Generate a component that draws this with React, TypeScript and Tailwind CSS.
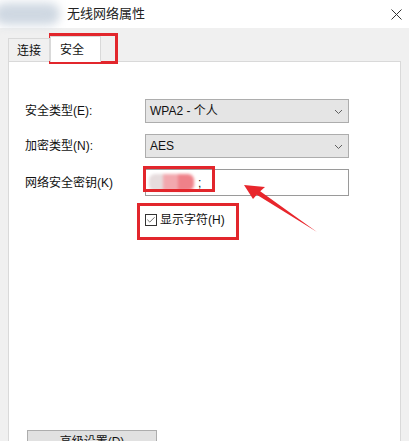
import { Check } from "lucide-react";

const font = "font-['Liberation_Sans','Noto_Sans_CJK_SC',sans-serif]";

function Select({ value }: { value: string }) {
  return (
    <div className="flex h-[24px] w-[204px] items-center justify-between border border-[#adadad] bg-[#e5e5e5] pl-[4px] pr-[5px] text-[12px] text-[#111]">
      <span>{value}</span>
      <svg width="9" height="6" viewBox="0 0 9 6" className="mt-[1px]">
        <path d="M1 1l3.5 3.5L8 1" fill="none" stroke="#606060" strokeWidth="1" />
      </svg>
    </div>
  );
}

export default function App() {
  return (
    <div className={`relative h-[441px] w-[409px] overflow-hidden bg-[#f0f0f0] text-[12px] text-[#111] ${font}`}>
      {/* title bar */}
      <header className="flex h-[28px] items-center bg-white">
        <div className="-ml-[6px] h-[22px] w-[66px] rounded-full bg-[#cfd8e2] blur-[5px]" />
        <span className="ml-[7px] text-[13px] text-[#222]">无线网络属性</span>
        <svg width="11" height="11" viewBox="0 0 11 11" className="ml-auto mr-[7px]">
          <path d="M0.5 0.5l10 10M10.5 0.5l-10 10" stroke="#333" strokeWidth="1" />
        </svg>
      </header>

      <div className="px-[8px] pt-[8px]">
        {/* tabs */}
        <div className="relative z-10 flex h-[25px] items-end">
          <div className="flex h-[23px] w-[42px] items-center justify-center border border-b-0 border-[#d9d9d9] bg-[#f0f0f0] pt-[2px]">
            连接
          </div>
          <div className="-mb-[1px] flex h-[26px] w-[51px] items-start border border-b-0 border-[#d9d9d9] bg-white pl-[9px] pt-[4px]">
            安全
          </div>
        </div>

        {/* panel */}
        <div className="flex h-[420px] flex-col border border-[#d9d9d9] bg-white pl-[16px] pt-[37px]">
          <div className="grid grid-cols-[120px_204px] items-center gap-y-[11px]">
            <span>安全类型(E):</span>
            <Select value="WPA2 - 个人" />
            <span>加密类型(N):</span>
            <Select value="AES" />
            <span>网络安全密钥(K)</span>
            <div className="flex h-[27px] items-center border border-[#9a9a9a] bg-white pl-[3px]">
              <div className="flex h-[17px] w-[45px] overflow-hidden rounded-[6px] blur-[1.5px]">
                <div className="w-[14px] bg-[#e6dcdd]" />
                <div className="w-[15px] bg-[#f2a8ae]" />
                <div className="w-[16px] bg-[#ef8189]" />
              </div>
              <span className="ml-[4px]">;</span>
            </div>
          </div>

          <label className="ml-[120px] mt-[15px] flex items-center gap-[3px]">
            <span className="flex h-[12px] w-[12px] items-center justify-center border border-[#333] bg-white">
              <Check size={10} strokeWidth={1.6} color="#222" />
            </span>
            显示字符(H)
          </label>

          <button
            type="button"
            className="ml-[2px] mt-[201px] h-[24px] w-[130px] border border-[#adadad] bg-[#e1e1e1] text-[12px] text-[#111]"
          >
            高级设置(D)
          </button>
        </div>
      </div>

      {/* annotations */}
      <div className="absolute left-[49px] top-[33px] h-[31px] w-[69px] border-[3px] border-[#e2262c]" />
      <div className="absolute left-[143px] top-[166px] h-[26px] w-[72px] border-[3px] border-[#e2262c]" />
      <div className="absolute left-[137px] top-[203px] h-[37px] w-[102px] border-[3px] border-[#e2262c]" />
      <svg className="absolute left-0 top-0" width="409" height="441" viewBox="0 0 409 441">
        <polygon
          points="244,185 265,187 260.2,191.2 317,232 256.8,194.8 253,199"
          fill="#e8262c"
        />
      </svg>
    </div>
  );
}
